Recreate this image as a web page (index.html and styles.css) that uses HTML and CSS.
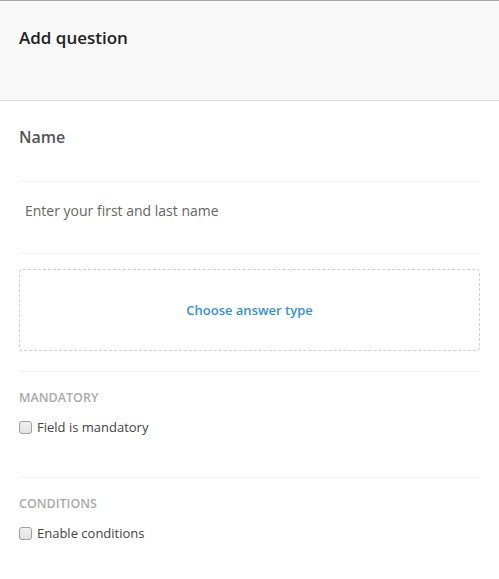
FILE: index.html
```html
<!DOCTYPE html>
<html lang="en">
<head>
<meta charset="utf-8">
<title>Add question</title>
<link rel="stylesheet" href="styles.css">
</head>
<body>
<header class="header">
  <h1 class="title">Add question</h1>
</header>
<main class="content">
  <section class="block block-name">
    <h2 class="name">Name</h2>
  </section>
  <section class="block block-input">
    <div class="placeholder">Enter your first and last name</div>
  </section>
  <section class="block block-answer">
    <div class="answer-box"><span class="answer-link">Choose answer type</span></div>
  </section>
  <section class="block block-option">
    <div class="option-label">MANDATORY</div>
    <label class="check-row"><input type="checkbox" class="check"><span>Field is mandatory</span></label>
  </section>
  <section class="block block-option last">
    <div class="option-label">CONDITIONS</div>
    <label class="check-row"><input type="checkbox" class="check"><span>Enable conditions</span></label>
  </section>
</main>
</body>
</html>
```
FILE: styles.css
```css
* { box-sizing: border-box; }
html, body { margin: 0; padding: 0; background: #fff; }
body {
  font-family: "Open Sans", "Noto Sans", sans-serif;
  color: #333;
  border-top: 1px solid #a6a6a6;
}
.header {
  background: #f8f8f8;
  height: 100px;
  border-bottom: 1px solid #dcdcdc;
  padding: 25px 19px 0;
}
.title {
  margin: 0;
  font-size: 17px;
  line-height: 24px;
  font-weight: 600;
  color: #222;
}
.content { padding: 0 19px; }
.block { border-bottom: 1px solid #f2f2f2; }
.block.last { border-bottom: none; }
.block-name { padding: 26px 0 34px; }
.name {
  margin: 0;
  font-size: 16px;
  line-height: 20px;
  font-weight: 600;
  color: #555;
}
.block-input { padding: 19px 6px 32px; }
.placeholder {
  font-size: 14px;
  line-height: 20px;
  color: #666;
}
.block-answer { padding: 15px 0 20px; }
.answer-box {
  height: 82px;
  border: 1px dashed #cfcfcf;
  border-radius: 4px;
  display: flex;
  align-items: center;
  justify-content: center;
}
.answer-link {
  font-size: 13px;
  font-weight: 600;
  color: #3490e6;
  line-height: 20px;
}
.block-option {
  padding: 18px 0 40px;
  display: flex;
  flex-direction: column;
  gap: 11px;
}
.option-label {
  font-size: 12.5px;
  line-height: 16px;
  font-weight: 600;
  color: #aaa;
}
.check-row {
  display: flex;
  align-items: center;
  gap: 5px;
  font-size: 13px;
  line-height: 20px;
  color: #444;
}
.check {
  appearance: none;
  -webkit-appearance: none;
  margin: 0;
  width: 13px;
  height: 13px;
  border: 1px solid #a0a0a0;
  border-radius: 3px;
  background: linear-gradient(#f0f0f0, #e2e2e2);
}
```
